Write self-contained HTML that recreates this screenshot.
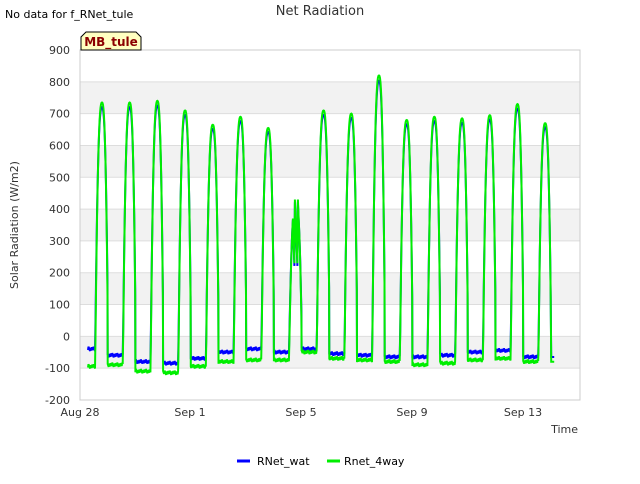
<!DOCTYPE html><html><head><style>
body{margin:0;width:640px;height:480px;background:#fff;font-family:"DejaVu Sans","Liberation Sans",sans-serif;overflow:hidden}
</style></head><body>
<svg width="640" height="480" xmlns="http://www.w3.org/2000/svg" font-family="DejaVu Sans, Liberation Sans, sans-serif">
<rect x="80" y="50" width="500" height="350" fill="#fff"/>
<g fill="#f2f2f2">
<rect x="80" y="81.8" width="500" height="31.8"/>
<rect x="80" y="145.5" width="500" height="31.8"/>
<rect x="80" y="209.1" width="500" height="31.8"/>
<rect x="80" y="272.7" width="500" height="31.8"/>
<rect x="80" y="336.4" width="500" height="31.8"/>
</g>
<g stroke="#ddd" stroke-width="1" id="grid"></g>
<rect x="80" y="50" width="500" height="350" fill="none" stroke="#ccc"/>
<g font-size="11" fill="#333" text-anchor="end" id="yl"></g>
<g font-size="11" fill="#333" text-anchor="middle">
<text x="80" y="416">Aug 28</text><text x="190" y="416">Sep 1</text><text x="301" y="416">Sep 5</text><text x="412" y="416">Sep 9</text><text x="523" y="416">Sep 13</text>
</g>
<text x="578" y="433" font-size="11" fill="#333" text-anchor="end">Time</text>
<text x="18" y="225" font-size="11" fill="#333" text-anchor="middle" transform="rotate(-90 18 225)">Solar Radiation (W/m2)</text>
<text x="320" y="15" font-size="13" fill="#333" text-anchor="middle">Net Radiation</text>
<text x="5" y="18" font-size="11" fill="#000">No data for f_RNet_tule</text>
<path d="M81,50 L81,37 L86,32 L136,32 L141,37 L141,50 Z" fill="#ffffc0" stroke="#000"/>
<text x="111" y="46" font-size="12" font-weight="bold" fill="#8b0000" text-anchor="middle">MB_tule</text>
<polyline id="b" fill="none" stroke="#0000ff" stroke-width="2"/>
<polyline id="g" fill="none" stroke="#00ee00" stroke-width="2"/>
<line x1="237" y1="461" x2="250" y2="461" stroke="#0000ff" stroke-width="3"/>
<text x="257" y="465" font-size="11" fill="#000">RNet_wat</text>
<line x1="327" y1="461" x2="340" y2="461" stroke="#00ee00" stroke-width="3"/>
<text x="344" y="465" font-size="11" fill="#000">Rnet_4way</text>
</svg>
<script>
function Y(v){return 400-(v+200)*350/1100;}
var g=document.getElementById('grid'),yl=document.getElementById('yl'),s='',t='';
for(var v=-200;v<=900;v+=100){var y=Y(v);s+='<line x1="80" x2="580" y1="'+y+'" y2="'+y+'"/>';t+='<text x="70" y="'+(y+4)+'">'+v+'</text>';}
g.innerHTML=s;yl.innerHTML=t;
var pk=[735,735,740,710,665,690,655,430,710,700,820,680,690,685,695,730,670];
var ng=[-95,-90,-110,-115,-95,-80,-75,-75,-50,-70,-75,-80,-90,-85,-75,-70,-80,-70];
var nb=[-40,-60,-80,-85,-70,-50,-40,-50,-40,-55,-60,-65,-65,-60,-50,-45,-65,-55];
function build(n,k){var p=[];var d=27.7;
 for(var i=0;i<17;i++){var x0=80+i*d;
  var st=(i==0)?8:0;
  for(var o=st;o<=27.5;o+=0.5){var x=x0+o,v;
   var nn=n[i]+((i*13+o*7)%5-2)*3;
   if(o<15.5){v=nn;}
   else{var f=(o-22)/(o<22?6.8:6.2);var pkv=pk[i]*(k?1:0.98);v=nn+(pkv-nn)*Math.max(0,1-Math.pow(Math.abs(f),2.6));
     if(i==7&&o>19&&o<25)v=pkv-((o*7)%3)*80;}
   p.push(x.toFixed(1)+','+Y(v).toFixed(1));}
  if(i==16){p.push((x0+28).toFixed(1)+','+Y(n[i]).toFixed(1));p.push((x0+31).toFixed(1)+','+Y(n[i]).toFixed(1));}
 }return p.join(' ');}
document.getElementById('b').setAttribute('points',build(nb,0));
document.getElementById('g').setAttribute('points',build(ng,1));
</script>
</body></html>
